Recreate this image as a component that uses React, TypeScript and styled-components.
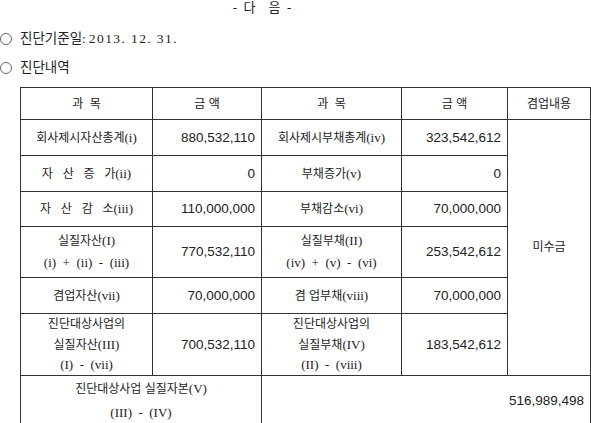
import React from 'react';
import styled, { createGlobalStyle } from 'styled-components';

const GlobalStyle = createGlobalStyle`
  html, body {
    margin: 0;
    padding: 0;
    background: #fff;
  }
  body {
    font-family: "Liberation Serif", "Noto Sans CJK KR", serif;
    color: #222;
  }
`

const Page = styled.div`
  width: 591px;
  height: 423px;
  overflow: hidden;
  display: flex;
  flex-direction: column;
`

const Title = styled.div`
  width: 524px;
  text-align: center;
  font-size: 13px;
  line-height: 15px;
  height: 15px;
  white-space: pre;
`

const Bullet = styled.div<{ $top: number }>`
  display: flex;
  align-items: center;
  gap: 8px;
  height: 20px;
  margin-top: ${(p) => p.$top}px;
  font-size: 13.5px;
  line-height: 20px;
`

const Circle = styled.span`
  box-sizing: border-box;
  width: 12px;
  height: 12px;
  border: 1px solid #666;
  border-radius: 50%;
  flex: none;
`

const DateText = styled.span`
  letter-spacing: 1.4px;
  margin-left: 3px;
  white-space: pre;
`

const Hangul = styled.span`
  font-size: 12px;
`

const Table = styled.table`
  margin: 9px 0 0 20px;
  width: 570px;
  border-collapse: collapse;
  table-layout: fixed;
  font-size: 13px;
  line-height: 20px;

  td {
    border: 1px solid #333;
    padding: 0;
    box-sizing: border-box;
  }
`

const Row = styled.tr<{ $h: number; $lh?: number }>`
  height: ${(p) => p.$h}px;
  td {
    height: ${(p) => p.$h}px;
    line-height: ${(p) => p.$lh || 20}px;
  }
`

const Label = styled.td`
  text-align: center;
  white-space: pre;
`

const Amount = styled.td`
  text-align: right;
  padding-right: 6px !important;
  font-family: "Liberation Sans", "Noto Sans CJK KR", sans-serif;
  font-size: 13.5px;
`

type Item = {
  label: string[]
  amount: string
}

type Line = {
  h: number
  lh?: number
  left: Item
  right: Item
}

const lines: Line[] = [
  { h: 36, left: { label: ['회사제시자산총계(i)'], amount: '880,532,110' }, right: { label: ['회사제시부채총계(iv)'], amount: '323,542,612' } },
  { h: 36, left: { label: ['자   산   증   가(ii)'], amount: '0' }, right: { label: ['부채증가(v)'], amount: '0' } },
  { h: 35, left: { label: ['자   산   감   소(iii)'], amount: '110,000,000' }, right: { label: ['부채감소(vi)'], amount: '70,000,000' } },
  { h: 51, lh: 22, left: { label: ['실질자산(I)', '(i)  +  (ii)  -  (iii)'], amount: '770,532,110' }, right: { label: ['실질부채(II)', '(iv)  +  (v)  -  (vi)'], amount: '253,542,612' } },
  { h: 36, left: { label: ['겸업자산(vii)'], amount: '70,000,000' }, right: { label: ['겸 업부채(viii)'], amount: '70,000,000' } },
  { h: 59, lh: 19.5, left: { label: ['진단대상사업의', '실질자산(III)', '(I)  -  (vii)'], amount: '700,532,110' }, right: { label: ['진단대상사업의', '실질부채(IV)', '(II)  -  (viii)'], amount: '183,542,612' } },
]

// korean runs are set a touch smaller than the latin parts
const splitHangul = (text: string) =>
  text.split(/([\uAC00-\uD7A3]+)/).filter(Boolean).map((part, i) =>
    /[\uAC00-\uD7A3]/.test(part) ? <Hangul key={i}>{part}</Hangul> : <React.Fragment key={i}>{part}</React.Fragment>
  )

const renderLabel = (label: string[]) =>
  label.map((text, i) => (
    <React.Fragment key={i}>
      {i > 0 && <br />}
      {splitHangul(text)}
    </React.Fragment>
  ))

const App: React.FC = () => {
  return (
    <Page>
      <GlobalStyle />
      <Title>{'-  다    음  -'}</Title>
      <Bullet $top={14}>
        <Circle />
        <span>
          진단기준일:<DateText>{'2013. 12. 31.'}</DateText>
        </span>
      </Bullet>
      <Bullet $top={9}>
        <Circle />
        <span>진단내역</span>
      </Bullet>
      <Table>
        <colgroup>
          <col style={{ width: 132 }} />
          <col style={{ width: 109 }} />
          <col style={{ width: 140 }} />
          <col style={{ width: 106 }} />
          <col style={{ width: 83 }} />
        </colgroup>
        <tbody>
          <Row $h={32}>
            <Label>{renderLabel(['과  목'])}</Label>
            <Label>{renderLabel(['금 액'])}</Label>
            <Label>{renderLabel(['과  목'])}</Label>
            <Label>{renderLabel(['금 액'])}</Label>
            <Label>{renderLabel(['겸업내용'])}</Label>
          </Row>
          {lines.map((line, i) => (
            <Row key={i} $h={line.h} $lh={line.lh}>
              <Label>{renderLabel(line.left.label)}</Label>
              <Amount>{line.left.amount}</Amount>
              <Label>{renderLabel(line.right.label)}</Label>
              <Amount>{line.right.amount}</Amount>
              {i === 0 && <Label rowSpan={6}>{renderLabel(['미수금'])}</Label>}
            </Row>
          ))}
          <Row $h={50} $lh={23}>
            <Label colSpan={2}>{renderLabel(['진단대상사업 실질자본(V)', '(III)  -  (IV)'])}</Label>
            <Amount colSpan={3}>516,989,498</Amount>
          </Row>
        </tbody>
      </Table>
    </Page>
  )
}

export default App
